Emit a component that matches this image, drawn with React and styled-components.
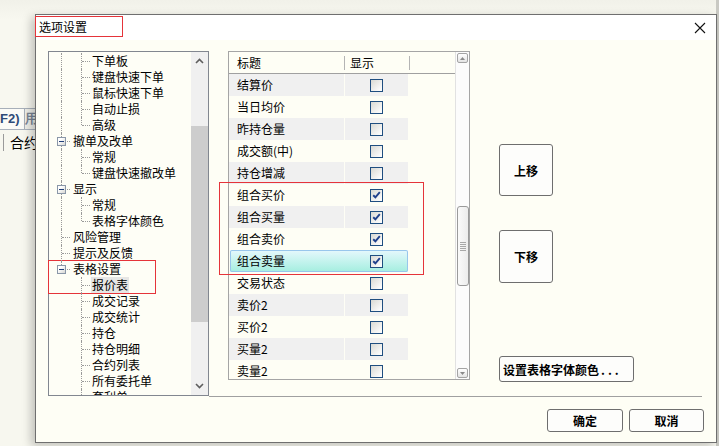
import React from "react";
import styled, { createGlobalStyle } from "styled-components";

const GlobalStyle = createGlobalStyle`
  html, body { margin: 0; padding: 0; }
  body {
    background: #f6f6ee;
    font-family: "Noto Sans CJK SC", "Noto Sans", sans-serif;
    font-size: 12px;
    color: #000;
  }
`;

const treeTop = [
  { label: "下单板", lines: ["pass", "tee"] },
  { label: "键盘快速下单", lines: ["pass", "tee"] },
  { label: "鼠标快速下单", lines: ["pass", "tee"] },
  { label: "自动止损", lines: ["pass", "tee"] },
  { label: "高级", lines: ["pass", "end"] },
  { label: "撤单及改单", lines: ["tee"], box: true },
  { label: "常规", lines: ["pass", "tee"] },
  { label: "键盘快速撤改单", lines: ["pass", "end"] },
  { label: "显示", lines: ["tee"], box: true },
  { label: "常规", lines: ["pass", "tee"] },
  { label: "表格字体颜色", lines: ["pass", "end"] },
  { label: "风险管理", lines: ["tee"] },
  { label: "提示及反馈", lines: ["tee"] },
];

const treeMarked = [
  { label: "表格设置", lines: ["end"], box: true },
  { label: "报价表", lines: ["none", "tee"], selected: true },
];

const treeTail = ["成交记录", "成交统计", "持仓", "持仓明细", "合约列表", "所有委托单", "套利单"].map(
  (label) => ({ label, lines: ["none", "tee"] })
);

const fields = [
  { name: "结算价" },
  { name: "当日均价" },
  { name: "昨持仓量" },
  { name: "成交额(中)" },
  { name: "持仓增减" },
  { name: "组合买价", on: true },
  { name: "组合买量", on: true },
  { name: "组合卖价", on: true },
  { name: "组合卖量", on: true, selected: true },
  { name: "交易状态" },
  { name: "卖价2" },
  { name: "买价2" },
  { name: "买量2" },
  { name: "卖量2" },
];

/* ---------- background window ---------- */

const Desktop = styled.div`
  position: relative;
  width: 719px;
  height: 446px;
  overflow: hidden;
  background: #f7f7ef;
`;

const BackApp = styled.div`
  display: flex;
  flex-direction: column;
  height: 100%;
  border-right: 3px solid #c9c9c3;
  box-sizing: border-box;
`;

const BackTop = styled.div`
  height: 106px;
  background: linear-gradient(#f1f1e9, #f8f8f0 20px);
`;

const TabStrip = styled.div`
  display: flex;
  align-items: flex-end;
  height: 23px;
  border-bottom: 1px solid #aab2bc;
`;

const BackTab = styled.div`
  height: 20px;
  padding: 0 4px 0 0;
  border: 1px solid #a7afb9;
  border-bottom: none;
  border-left: none;
  background: ${(p) => (p.active ? "#fbfbf7" : "#eeeee8")};
  font-family: "Liberation Sans", Arial, sans-serif;
  font-weight: bold;
  font-size: 13px;
  line-height: 20px;
  color: ${(p) => (p.active ? "#2f4b78" : "#7a8494")};
`;

const FieldRow = styled.div`
  display: flex;
  align-items: center;
  height: 24px;
  padding-left: 3px;
  gap: 6px;
  font-size: 14px;
`;

const VBar = styled.span`
  width: 1px;
  height: 17px;
  background: #9a9a9a;
`;

/* ---------- dialog ---------- */

const Dialog = styled.div`
  position: absolute;
  left: 35px;
  top: 14px;
  width: 682px;
  height: 429px;
  box-sizing: border-box;
  border: 1px solid #6f6f6f;
  background: #fefef5;
  box-shadow: -4px 3px 9px rgba(0, 0, 0, 0.22);
  display: flex;
  flex-direction: column;
`;

const TitleBar = styled.div`
  height: 25px;
  background: #fff;
  display: flex;
  justify-content: space-between;
  align-items: flex-start;
`;

const TitleMark = styled.div`
  margin: 1px 0 0 -1px;
  width: 88px;
  height: 21px;
  box-sizing: border-box;
  border: 1px solid #e5343a;
  padding-left: 3px;
  line-height: 19px;
`;

const CloseBtn = styled.div`
  width: 32px;
  height: 25px;
  display: flex;
  align-items: center;
  justify-content: center;
`;

const Body = styled.div`
  flex: 1;
  display: flex;
  flex-direction: column;
  padding: 11px 14px 0 12px;
`;

const MainRow = styled.div`
  display: flex;
  align-items: flex-start;
`;

/* ---------- tree ---------- */

const TreePanel = styled.div`
  width: 161px;
  height: 345px;
  box-sizing: border-box;
  border: 1px solid #828790;
  background: #fefef6;
  display: flex;
`;

const TreeContent = styled.div`
  flex: 1;
  padding: 1px 0 0 2px;
  overflow-x: visible;
  overflow-y: clip;
`;

const TreeRow = styled.div`
  display: flex;
  height: 16px;
  line-height: 16px;
  white-space: nowrap;
`;

const Indent = styled.span`
  position: relative;
  flex: none;
  width: 20px;
  height: 16px;

  &::before {
    content: "";
    position: absolute;
    left: 10px;
    top: 0;
    bottom: ${(p) => (p.kind === "end" ? "8px" : "0")};
    border-left: 1px dotted #9a9a9a;
    display: ${(p) => (p.kind === "none" ? "none" : "block")};
  }

  &::after {
    content: "";
    position: absolute;
    left: 11px;
    right: 1px;
    top: 8px;
    border-top: 1px dotted #9a9a9a;
    display: ${(p) => (p.kind === "tee" || p.kind === "end" ? "block" : "none")};
  }
`;

const ExpandBox = styled.span`
  position: absolute;
  z-index: 1;
  left: 6px;
  top: 4px;
  width: 9px;
  height: 9px;
  box-sizing: border-box;
  border: 1px solid #8a97a8;
  background: linear-gradient(135deg, #ffffff 30%, #d6d6d2);
  display: flex;
  align-items: center;
  justify-content: center;

  &::after {
    content: "";
    width: 5px;
    height: 1px;
    background: #22407a;
  }
`;

const TreeLabel = styled.span`
  padding: 0 1px;
  margin-left: ${(p) => (p.top ? "1px" : "0")};
  background: ${(p) => (p.selected ? "#e6e6e4" : "transparent")};
`;

const MarkedGroup = styled.div`
  width: 104px;
  outline: 1px solid #e5343a;
  outline-offset: 0;
  margin-left: -2px;
  padding-left: 2px;
`;

const TreeScroll = styled.div`
  width: 17px;
  flex: none;
  background: #f0f0f0;
  display: flex;
  flex-direction: column;
`;

const ScrollArrow = styled.div`
  height: 18px;
  display: flex;
  align-items: center;
  justify-content: center;
`;

const ScrollTrack = styled.div`
  flex: 1;
  padding-top: ${(p) => p.offset}px;
`;

const TreeThumb = styled.div`
  height: ${(p) => p.size}px;
  background: #cdcdcd;
`;

/* ---------- right side ---------- */

const RightSide = styled.div`
  flex: 1;
  height: 346px;
  box-sizing: border-box;
  border-bottom: 1px solid #a0a0a0;
  display: flex;
  align-items: flex-start;
`;

const ListWrap = styled.div`
  position: relative;
  margin-left: 19px;
  width: 242px;
  height: 329px;
`;

const ListBox = styled.div`
  height: 100%;
  box-sizing: border-box;
  border: 1px solid #a5a5a5;
  background: #fefef5;
  display: flex;
`;

const Table = styled.div`
  flex: 1;
  display: flex;
  flex-direction: column;
  overflow: hidden;
`;

const HeaderRow = styled.div`
  height: 21px;
  flex: none;
  border-bottom: 1px solid #a0a0a0;
  display: flex;
  align-items: center;
`;

const HeadCell = styled.div`
  width: ${(p) => p.w}px;
  padding-left: ${(p) => p.pad}px;
  box-sizing: border-box;
  font-size: 12px;
`;

const HeadSep = styled.span`
  width: 1px;
  height: 14px;
  background: #b4b4b4;
`;

const Rows = styled.div`
  flex: 1;
  overflow: hidden;
`;

const FieldLine = styled.div`
  display: flex;
  gap: 1px;
  height: 22px;
  width: ${(p) => (p.selected ? "178px" : "179px")};
  margin-left: ${(p) => (p.selected ? "1px" : "0")};
  box-sizing: border-box;
  border-radius: ${(p) => (p.selected ? "2px" : "0")};
  background: ${(p) => (p.selected ? "linear-gradient(#e6f8fd, #a4eedf)" : "transparent")};
  box-shadow: ${(p) => (p.selected ? "inset 0 0 0 1px #98c6ec" : "none")};
`;

const NameCell = styled.div`
  width: ${(p) => (p.selected ? "114px" : "115px")};
  padding-left: ${(p) => (p.selected ? "7px" : "8px")};
  box-sizing: border-box;
  line-height: 22px;
  background: ${(p) => (p.shade ? "#f0f0f0" : "transparent")};
`;

const CheckCell = styled.div`
  flex: 1;
  display: flex;
  align-items: center;
  justify-content: center;
  background: ${(p) => (p.shade ? "#f0f0f0" : "transparent")};
`;

const CheckBox = styled.span`
  width: 13px;
  height: 13px;
  box-sizing: border-box;
  border: 1px solid #1f4e80;
  background: linear-gradient(135deg, #d9d9d3 0%, #fbfbfb 85%);
  display: flex;
  align-items: center;
  justify-content: center;
`;

const ListScroll = styled.div`
  width: 13px;
  flex: none;
  border-left: 1px solid #e2e2e2;
  background: #fcfcfc;
  display: flex;
  flex-direction: column;
  align-items: center;
`;

const SmallBtn = styled.div`
  margin: 1px 0;
  width: 11px;
  height: 10px;
  box-sizing: border-box;
  border: 1px solid #a4a4a4;
  border-radius: 2px;
  background: linear-gradient(#ffffff, #e4e4e4);
  display: flex;
  align-items: center;
  justify-content: center;
  margin-top: ${(p) => (p.bottom ? "auto" : "1px")};
`;

const ListThumb = styled.div`
  margin-top: ${(p) => p.offset}px;
  width: 12px;
  height: ${(p) => p.size}px;
  box-sizing: border-box;
  border: 1px solid #9a9a9a;
  border-radius: 3px;
  background: linear-gradient(90deg, #fafafa, #ececec);
  display: flex;
  flex-direction: column;
  align-items: center;
  justify-content: center;
  gap: 1px;
`;

const Grip = styled.span`
  width: 6px;
  height: 1px;
  background: #a8a8a8;
`;

const Mark = styled.div`
  position: absolute;
  left: ${(p) => p.x}px;
  top: ${(p) => p.y}px;
  width: ${(p) => p.w}px;
  height: ${(p) => p.h}px;
  box-sizing: border-box;
  border: 1px solid #e5343a;
  pointer-events: none;
`;

const ButtonCol = styled.div`
  margin-left: 29px;
  padding-top: 93px;
  display: flex;
  flex-direction: column;
`;

const PushButton = styled.button`
  width: ${(p) => p.w}px;
  height: ${(p) => p.h}px;
  margin-top: ${(p) => p.gap || 0}px;
  padding: ${(p) => (p.left ? "0 0 0 3px" : "0")};
  text-align: ${(p) => (p.left ? "left" : "center")};
  box-sizing: border-box;
  border: 1px solid #6e6e6e;
  border-radius: 3px;
  background: #fdfdfb;
  font-family: "Noto Sans CJK SC", "Noto Sans", sans-serif;
  font-weight: 700;
  font-size: 12px;
  color: #000;
  white-space: nowrap;
`;

const Dots = styled.span`
  letter-spacing: 3px;
  margin-left: 2px;
`;

const Footer = styled.div`
  display: flex;
  justify-content: flex-end;
  gap: 6px;
  padding-top: 12px;
  margin-right: -2px;
`;

function Chevron({ up }) {
  return (
    <svg width="9" height="6" viewBox="0 0 9 6">
      <path
        d={up ? "M1 5 L4.5 1.5 L8 5" : "M1 1 L4.5 4.5 L8 1"}
        fill="none"
        stroke="#5e5e5e"
        strokeWidth="1.6"
      />
    </svg>
  );
}

function Tri({ up }) {
  return (
    <svg width="5" height="3" viewBox="0 0 5 3">
      <path d={up ? "M0 3 L2.5 0 L5 3 Z" : "M0 0 L2.5 3 L5 0 Z"} fill="#8a8a8a" />
    </svg>
  );
}

function TreeItem({ item }) {
  const last = item.lines.length - 1;
  return (
    <TreeRow>
      {item.lines.map((kind, i) => (
        <Indent key={i} kind={kind}>
          {item.box && i === last && <ExpandBox />}
        </Indent>
      ))}
      <TreeLabel top={item.lines.length === 1} selected={item.selected}>
        {item.label}
      </TreeLabel>
    </TreeRow>
  );
}

function Field({ field, index }) {
  const shade = index % 2 === 0 && !field.selected;
  return (
    <FieldLine selected={field.selected}>
      <NameCell shade={shade} selected={field.selected}>
        {field.name}
      </NameCell>
      <CheckCell shade={shade}>
        <CheckBox>
          {field.on && (
            <svg width="9" height="8" viewBox="0 0 9 8">
              <path d="M1.2 4.2 L3.4 6.3 L7.8 1.2" fill="none" stroke="#20418c" strokeWidth="1.9" />
            </svg>
          )}
        </CheckBox>
      </CheckCell>
    </FieldLine>
  );
}

export default function App() {
  return (
    <>
      <GlobalStyle />
      <Desktop>
        <BackApp>
          <BackTop />
          <TabStrip>
            <BackTab active>F2)</BackTab>
            <BackTab>用户</BackTab>
          </TabStrip>
          <FieldRow>
            <VBar />
            <span>合约</span>
          </FieldRow>
        </BackApp>

        <Dialog>
          <TitleBar>
            <TitleMark>选项设置</TitleMark>
            <CloseBtn>
              <svg width="12" height="12" viewBox="0 0 12 12">
                <path d="M1 1 L11 11 M11 1 L1 11" stroke="#111" strokeWidth="1.1" />
              </svg>
            </CloseBtn>
          </TitleBar>

          <Body>
            <MainRow>
              <TreePanel>
                <TreeContent>
                  {treeTop.map((item, i) => (
                    <TreeItem key={i} item={item} />
                  ))}
                  <MarkedGroup>
                    {treeMarked.map((item, i) => (
                      <TreeItem key={i} item={item} />
                    ))}
                  </MarkedGroup>
                  {treeTail.map((item, i) => (
                    <TreeItem key={i} item={item} />
                  ))}
                </TreeContent>
                <TreeScroll>
                  <ScrollArrow>
                    <Chevron up />
                  </ScrollArrow>
                  <ScrollTrack offset={56}>
                    <TreeThumb size={196} />
                  </ScrollTrack>
                  <ScrollArrow>
                    <Chevron />
                  </ScrollArrow>
                </TreeScroll>
              </TreePanel>

              <RightSide>
                <ListWrap>
                  <ListBox>
                    <Table>
                      <HeaderRow>
                        <HeadCell w={115} pad={8}>标题</HeadCell>
                        <HeadSep />
                        <HeadCell w={64} pad={5}>显示</HeadCell>
                        <HeadSep />
                      </HeaderRow>
                      <Rows>
                        {fields.map((f, i) => (
                          <Field key={f.name} field={f} index={i} />
                        ))}
                      </Rows>
                    </Table>
                    <ListScroll>
                      <SmallBtn>
                        <Tri up />
                      </SmallBtn>
                      <ListThumb offset={142} size={80}>
                        <Grip />
                        <Grip />
                        <Grip />
                        <Grip />
                        <Grip />
                      </ListThumb>
                      <SmallBtn bottom>
                        <Tri />
                      </SmallBtn>
                    </ListScroll>
                  </ListBox>
                  <Mark x={-9} y={131} w={205} h={93} />
                </ListWrap>

                <ButtonCol>
                  <PushButton w={54} h={52}>上移</PushButton>
                  <PushButton w={54} h={53} gap={34}>下移</PushButton>
                  <PushButton w={135} h={26} gap={73} left>
                    设置表格字体颜色<Dots>...</Dots>
                  </PushButton>
                </ButtonCol>
              </RightSide>
            </MainRow>

            <Footer>
              <PushButton w={76} h={23}>确定</PushButton>
              <PushButton w={75} h={23}>取消</PushButton>
            </Footer>
          </Body>
        </Dialog>
      </Desktop>
    </>
  );
}
